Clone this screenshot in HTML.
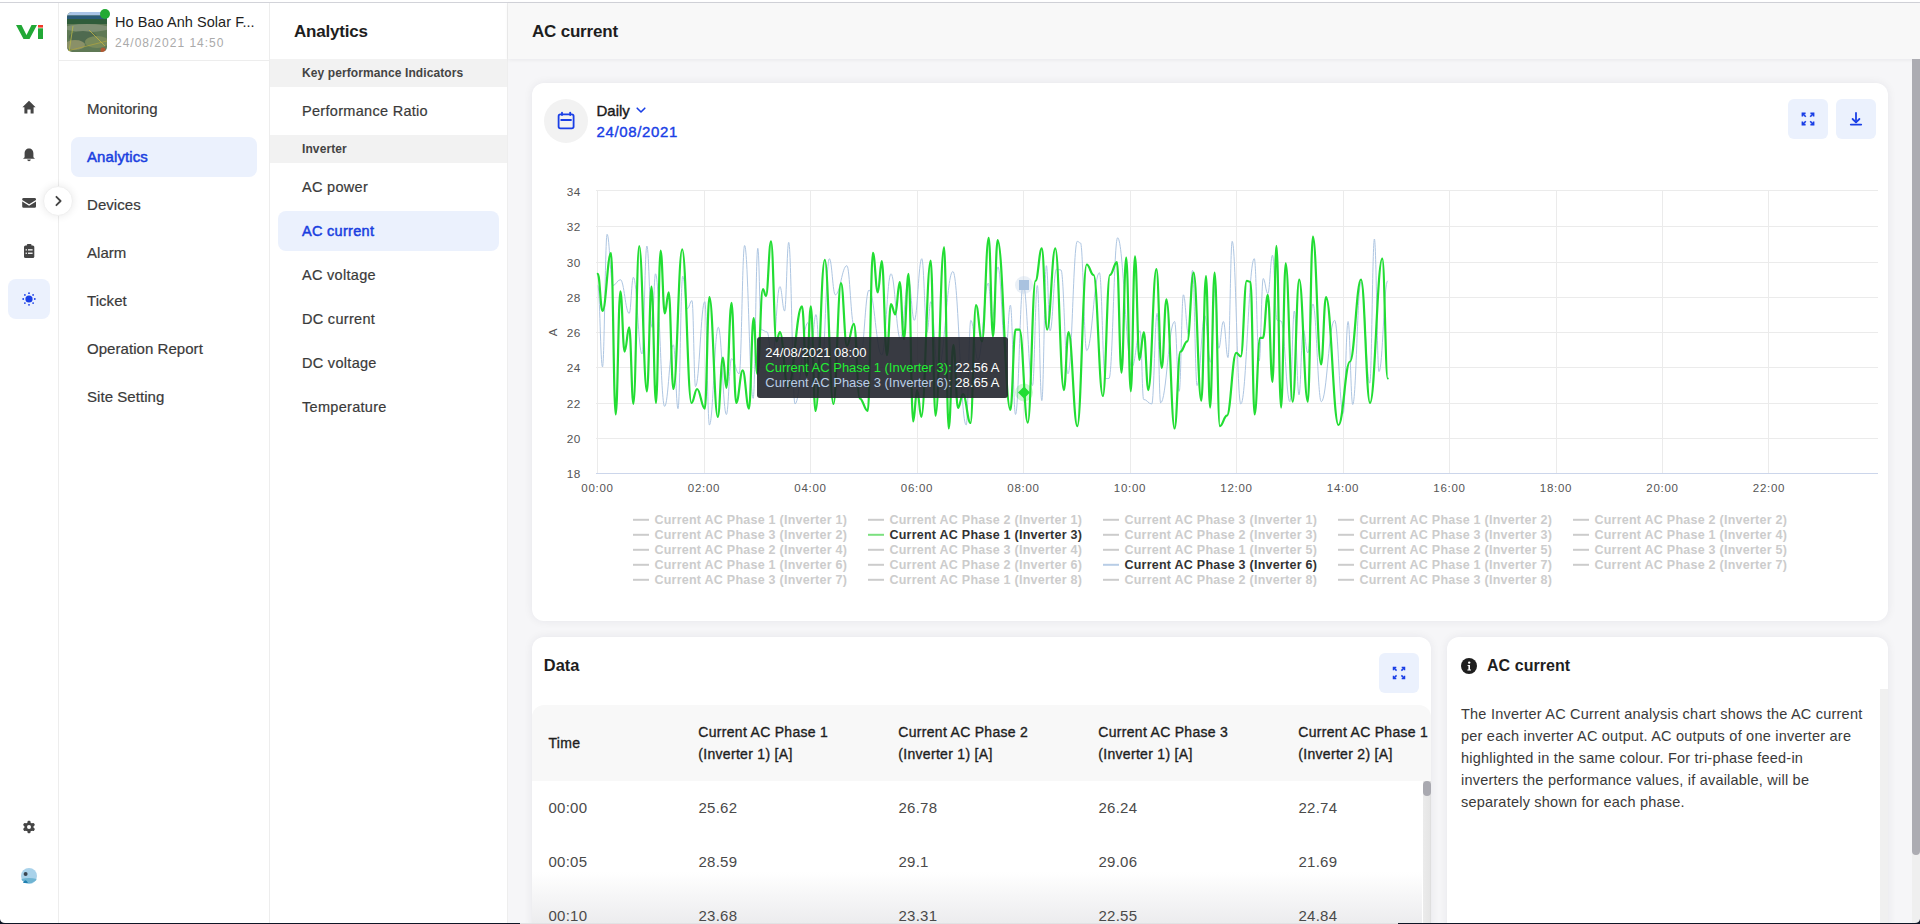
<!DOCTYPE html>
<html><head><meta charset="utf-8">
<style>
*{box-sizing:border-box;margin:0;padding:0}
html,body{width:1920px;height:924px;overflow:hidden;background:#fff;font-family:"Liberation Sans",sans-serif;color:#222}
.abs{position:absolute}
#topline{left:0;top:2px;width:1920px;height:1px;background:#d2d3d9}
#rail{left:0;top:3px;width:59px;height:921px;background:#fff;border-right:1px solid #ededed}
#nav{left:59px;top:3px;width:211px;height:921px;background:#fff;border-right:1px solid #ededed}
#navhead{left:59px;top:3px;width:210px;height:58px;border-bottom:1px solid #ededed}
#sub{left:270px;top:3px;width:238px;height:921px;background:#fff;border-right:1px solid #eeeeee}
#main{left:508px;top:3px;width:1404px;height:921px;background:#f6f6f8}
#mainhead{left:508px;top:3px;width:1412px;height:56px;background:#f8f8f8;box-shadow:0 1px 4px rgba(0,0,30,0.06)}
#sbtrack{left:1912px;top:59px;width:8px;height:865px;background:#efefef}
#sbthumb{left:1912px;top:59px;width:8px;height:796px;background:#acacb2;border-radius:0 0 4px 4px}
#bottomline{left:0;top:923px;width:1920px;height:1px;background:#0f1626}
.card{background:#fff;border-radius:12px;box-shadow:0 0 10px rgba(30,30,60,0.07)}
.navitem{position:absolute;left:87px;font-size:15px;color:#3a3a3a;letter-spacing:0.05px;-webkit-text-stroke:0.2px #3a3a3a}
.subitem{position:absolute;left:302px;font-size:14.5px;color:#3a3a3a;letter-spacing:0.3px;-webkit-text-stroke:0.2px #3a3a3a}
.band{position:absolute;left:270px;width:237px;height:27px;background:#f2f2f2}
.th{font-size:14px;font-weight:400;color:#1e1e1e;line-height:22px;letter-spacing:0.3px;-webkit-text-stroke:0.35px #1e1e1e}
.td{font-size:15px;color:#4a4a4a;letter-spacing:0.25px}
.bandtxt{position:absolute;left:302px;font-size:12px;font-weight:700;color:#444;letter-spacing:0.1px}
</style></head><body>
<div id="topline" class="abs"></div>
<div id="rail" class="abs"></div>
<div id="nav" class="abs"></div>
<div id="navhead" class="abs"></div>
<div id="sub" class="abs"></div>
<div id="main" class="abs"></div>
<div id="mainhead" class="abs"></div>
<div id="sbtrack" class="abs"></div>
<div id="sbthumb" class="abs"></div>


<!-- rail icons -->
<svg class="abs" style="left:0;top:0" width="59" height="924" viewBox="0 0 59 924">
  <!-- logo -->
  <path d="M16 25 L21.5 25 L26.5 35 L31.5 25 L37 25 L29.5 39 L23.5 39 Z" fill="#22a836"/>
  <rect x="38" y="25" width="5" height="2.6" fill="#f03a2a"/>
  <rect x="38" y="28.3" width="5" height="10.7" fill="#22a836"/>
  <!-- home -->
  <path d="M29 100.8 L35.6 107.2 L33.6 107.2 L33.6 113.4 L30.6 113.4 L30.6 109.6 L27.4 109.6 L27.4 113.4 L24.4 113.4 L24.4 107.2 L22.4 107.2 Z" fill="#454545"/>
  <!-- bell -->
  <path d="M29 148.4 C25.6 148.4 24.6 151 24.6 153.6 L24.6 157.2 L23 158.8 L35 158.8 L33.4 157.2 L33.4 153.6 C33.4 151 32.4 148.4 29 148.4 Z" fill="#454545"/>
  <path d="M27.2 159.6 L30.8 159.6 C30.6 160.8 29.9 161.3 29 161.3 C28.1 161.3 27.4 160.8 27.2 159.6 Z" fill="#454545"/>
  <!-- mail -->
  <path d="M22.2 199.4 Q22.2 198 23.6 198 L34.6 198 Q36 198 36 199.4 L36 200 L29.1 204.2 L22.2 200 Z" fill="#454545"/>
  <path d="M22.2 201.6 L29.1 205.8 L36 201.6 L36 206.4 Q36 207.8 34.6 207.8 L23.6 207.8 Q22.2 207.8 22.2 206.4 Z" fill="#454545"/>
  <!-- clipboard -->
  <rect x="24" y="245.5" width="10.3" height="12.5" rx="1.5" fill="#454545"/>
  <rect x="26.8" y="244" width="4.7" height="2.6" rx="1" fill="#454545"/>
  <rect x="25.6" y="249.2" width="1.3" height="1.3" fill="#fff"/>
  <rect x="28" y="249.2" width="4.6" height="1.3" fill="#fff"/>
  <rect x="25.6" y="252.6" width="1.3" height="1.3" fill="#fff"/>
  <rect x="28" y="252.6" width="4.6" height="1.3" fill="#fff"/>
  <!-- active box -->
  <rect x="8" y="279" width="42" height="40" rx="8" fill="#ebf1fd"/>
  <circle cx="29" cy="299" r="3.6" fill="#1a3fe6"/>
  <g fill="#1a3fe6">
    <circle cx="29" cy="293.2" r="0.9"/><circle cx="29" cy="304.8" r="0.9"/>
    <circle cx="23.2" cy="299" r="0.9"/><circle cx="34.8" cy="299" r="0.9"/>
    <circle cx="24.9" cy="294.9" r="0.9"/><circle cx="33.1" cy="294.9" r="0.9"/>
    <circle cx="24.9" cy="303.1" r="0.9"/><circle cx="33.1" cy="303.1" r="0.9"/>
  </g>
  <!-- gear -->
  <g transform="translate(29 827)">
    <g fill="#454545">
      <circle r="4.6"/>
      <rect x="-1.5" y="-6.2" width="3" height="12.4" rx="1"/>
      <rect x="-1.5" y="-6.2" width="3" height="12.4" rx="1" transform="rotate(60)"/>
      <rect x="-1.5" y="-6.2" width="3" height="12.4" rx="1" transform="rotate(120)"/>
    </g>
    <circle r="2" fill="#fff"/>
  </g>
  <!-- avatar -->
  <circle cx="29" cy="876" r="8" fill="#a9d2ea"/>
  <path d="M21.5 879 Q29 877 36.5 879 L36 880.5 Q29 886 22 880.5 Z" fill="#6fb4d2"/>
  <circle cx="25.6" cy="874" r="2" fill="#3b4550"/>
  <path d="M23 883 Q25.5 877.5 28 883 Z" fill="#1f7fb0"/>
</svg>
<!-- collapse button -->
<div class="abs" style="left:43px;top:186px;width:30px;height:30px;border-radius:50%;background:#fff;border:1px solid #f0f0f0;box-shadow:0 0 8px rgba(0,0,0,0.09)"></div>
<svg class="abs" style="left:43px;top:186px" width="30" height="30" viewBox="0 0 30 30"><path d="M13.4 10.8 L17.6 15 L13.4 19.2" fill="none" stroke="#444" stroke-width="1.8" stroke-linecap="round" stroke-linejoin="round"/></svg>


<!-- site header -->
<div class="abs" style="left:67px;top:12px;width:40px;height:40px;border-radius:5px;overflow:hidden"><svg style="display:block" width="40" height="40" viewBox="0 0 40 40"><g>
<rect width="40" height="40" fill="#5f7a55"/>
<rect width="40" height="3.5" fill="#a9c3e6"/>
<rect y="3.5" width="40" height="3.5" fill="#2b5a78"/>
<rect y="7" width="40" height="5" fill="#2f5c3a"/>
<ellipse cx="20" cy="16" rx="22" ry="4" fill="#7f8f74"/>
<ellipse cx="16" cy="25" rx="14" ry="6" fill="#4f6a4f"/>
<ellipse cx="30" cy="30" rx="12" ry="6" fill="#7a8a5c"/>
<ellipse cx="8" cy="33" rx="10" ry="5" fill="#8a9068"/>
<path d="M6 14 L2 40" stroke="#b8b848" stroke-width="1" opacity="0.8"/>
<path d="M0 39 L40 29" stroke="#b0a640" stroke-width="0.9" opacity="0.8"/>
<path d="M22 18 L38 34" stroke="#c2b444" stroke-width="1" opacity="0.8"/>
<circle cx="36" cy="38" r="2.5" fill="#c8502c" opacity="0.8"/>
</g></svg></div>
<div class="abs" style="left:100px;top:9px;width:10px;height:10px;border-radius:50%;background:#22aa33"></div>
<div class="abs" style="left:115px;top:13.5px;font-size:14.5px;color:#1e1e1e;letter-spacing:0.05px">Ho Bao Anh Solar F...</div>
<div class="abs" style="left:115px;top:36px;font-size:12px;color:#aaa;letter-spacing:1px">24/08/2021 14:50</div>

<!-- nav -->
<div class="abs" style="left:71px;top:137px;width:186px;height:40px;border-radius:8px;background:#ebf1fd"></div>
<div class="navitem" style="top:100px">Monitoring</div>
<div class="navitem" style="top:148px;color:#1a3fe0;font-weight:400;letter-spacing:0.1px;-webkit-text-stroke:0.5px #1a3fe0">Analytics</div>
<div class="navitem" style="top:196px">Devices</div>
<div class="navitem" style="top:244px">Alarm</div>
<div class="navitem" style="top:292px">Ticket</div>
<div class="navitem" style="top:340px">Operation Report</div>
<div class="navitem" style="top:388px">Site Setting</div>

<!-- sub nav -->
<div class="abs" style="left:294px;top:22px;font-size:17px;font-weight:700;color:#1e1e1e;letter-spacing:-0.2px">Analytics</div>
<div class="band" style="top:59px;height:28px"></div>
<div class="bandtxt" style="top:66px">Key performance Indicators</div>
<div class="subitem" style="top:103px">Performance Ratio</div>
<div class="band" style="top:135px;height:28px"></div>
<div class="bandtxt" style="top:142px">Inverter</div>
<div class="abs" style="left:278px;top:211px;width:221px;height:40px;border-radius:8px;background:#ebf1fd"></div>
<div class="subitem" style="top:179px">AC power</div>
<div class="subitem" style="top:223px;color:#1a3fe0;font-weight:400;letter-spacing:0.3px;-webkit-text-stroke:0.5px #1a3fe0">AC current</div>
<div class="subitem" style="top:267px">AC voltage</div>
<div class="subitem" style="top:311px">DC current</div>
<div class="subitem" style="top:355px">DC voltage</div>
<div class="subitem" style="top:399px">Temperature</div>

<!-- main header -->
<div class="abs" style="left:532px;top:22px;font-size:17px;font-weight:700;color:#1e1e1e;letter-spacing:-0.2px">AC current</div>

<!-- chart card -->
<div class="abs card" style="left:532px;top:83px;width:1356px;height:538px"></div>
<!-- data card -->
<div class="abs card" style="left:532px;top:637px;width:899px;height:300px"></div>
<!-- info card -->
<div class="abs card" style="left:1447px;top:637px;width:441px;height:300px"></div>


<!-- CHART_STATIC -->
<svg class="abs" style="left:0;top:0" width="1920" height="924" viewBox="0 0 1920 924">
<circle cx="566" cy="121" r="22" fill="#f2f2f2"/>
<g fill="none" stroke="#1a3fe6" stroke-width="1.8" stroke-linecap="round"><rect x="558.6" y="114.4" width="15" height="14" rx="1.8"/><line x1="561.2" y1="120" x2="571" y2="120"/><line x1="562" y1="112.6" x2="562" y2="115"/><line x1="570.2" y1="112.6" x2="570.2" y2="115"/></g>
<path d="M637.2 108.2 L641 112 L644.8 108.2" fill="none" stroke="#1a3fe6" stroke-width="1.6" stroke-linecap="round" stroke-linejoin="round"/>
<rect x="1788" y="99" width="40" height="40" rx="6" fill="#ebf1fd"/>
<rect x="1836" y="99" width="40" height="40" rx="6" fill="#ebf1fd"/>
<g fill="none" stroke="#1a3fe6" stroke-width="1.6" stroke-linecap="butt"><line x1="1805.8" y1="116.8" x2="1802.4" y2="113.4"/><polyline points="1802.4 116.60000000000001 1802.4 113.4 1805.6000000000001 113.4"/><line x1="1810.2" y1="116.8" x2="1813.6" y2="113.4"/><polyline points="1813.6 116.60000000000001 1813.6 113.4 1810.3999999999999 113.4"/><line x1="1805.8" y1="121.2" x2="1802.4" y2="124.6"/><polyline points="1802.4 121.39999999999999 1802.4 124.6 1805.6000000000001 124.6"/><line x1="1810.2" y1="121.2" x2="1813.6" y2="124.6"/><polyline points="1813.6 121.39999999999999 1813.6 124.6 1810.3999999999999 124.6"/></g>
<g fill="none" stroke="#1a3fe6" stroke-width="1.8" stroke-linecap="round" stroke-linejoin="round"><line x1="1856" y1="113" x2="1856" y2="122"/><polyline points="1852.6 119 1856 122.4 1859.4 119"/><line x1="1850.8" y1="124.6" x2="1861.2" y2="124.6"/></g>
<line x1="597.5" y1="190" x2="597.5" y2="473" stroke="#ebebeb" stroke-width="1"/>
<line x1="704.5" y1="190" x2="704.5" y2="473" stroke="#ebebeb" stroke-width="1"/>
<line x1="810.5" y1="190" x2="810.5" y2="473" stroke="#ebebeb" stroke-width="1"/>
<line x1="917.5" y1="190" x2="917.5" y2="473" stroke="#ebebeb" stroke-width="1"/>
<line x1="1023.5" y1="190" x2="1023.5" y2="473" stroke="#ebebeb" stroke-width="1"/>
<line x1="1130.5" y1="190" x2="1130.5" y2="473" stroke="#ebebeb" stroke-width="1"/>
<line x1="1236.5" y1="190" x2="1236.5" y2="473" stroke="#ebebeb" stroke-width="1"/>
<line x1="1343.5" y1="190" x2="1343.5" y2="473" stroke="#ebebeb" stroke-width="1"/>
<line x1="1449.5" y1="190" x2="1449.5" y2="473" stroke="#ebebeb" stroke-width="1"/>
<line x1="1556.5" y1="190" x2="1556.5" y2="473" stroke="#ebebeb" stroke-width="1"/>
<line x1="1662.5" y1="190" x2="1662.5" y2="473" stroke="#ebebeb" stroke-width="1"/>
<line x1="1768.5" y1="190" x2="1768.5" y2="473" stroke="#ebebeb" stroke-width="1"/>
<line x1="596" y1="190.5" x2="1878" y2="190.5" stroke="#ebebeb" stroke-width="1"/>
<line x1="596" y1="226.5" x2="1878" y2="226.5" stroke="#ebebeb" stroke-width="1"/>
<line x1="596" y1="262.5" x2="1878" y2="262.5" stroke="#ebebeb" stroke-width="1"/>
<line x1="596" y1="297.5" x2="1878" y2="297.5" stroke="#ebebeb" stroke-width="1"/>
<line x1="596" y1="332.5" x2="1878" y2="332.5" stroke="#ebebeb" stroke-width="1"/>
<line x1="596" y1="367.5" x2="1878" y2="367.5" stroke="#ebebeb" stroke-width="1"/>
<line x1="596" y1="403.5" x2="1878" y2="403.5" stroke="#ebebeb" stroke-width="1"/>
<line x1="596" y1="438.5" x2="1878" y2="438.5" stroke="#ebebeb" stroke-width="1"/>
<line x1="596" y1="473.5" x2="1878" y2="473.5" stroke="#ccd6eb" stroke-width="1"/>
<text x="580.5" y="196.20" text-anchor="end" font-size="11.8" fill="#555" letter-spacing="0.3">34</text>
<text x="580.5" y="231.44" text-anchor="end" font-size="11.8" fill="#555" letter-spacing="0.3">32</text>
<text x="580.5" y="266.68" text-anchor="end" font-size="11.8" fill="#555" letter-spacing="0.3">30</text>
<text x="580.5" y="301.92" text-anchor="end" font-size="11.8" fill="#555" letter-spacing="0.3">28</text>
<text x="580.5" y="337.16" text-anchor="end" font-size="11.8" fill="#555" letter-spacing="0.3">26</text>
<text x="580.5" y="372.40" text-anchor="end" font-size="11.8" fill="#555" letter-spacing="0.3">24</text>
<text x="580.5" y="407.64" text-anchor="end" font-size="11.8" fill="#555" letter-spacing="0.3">22</text>
<text x="580.5" y="442.88" text-anchor="end" font-size="11.8" fill="#555" letter-spacing="0.3">20</text>
<text x="580.5" y="478.12" text-anchor="end" font-size="11.8" fill="#555" letter-spacing="0.3">18</text>
<text x="597.5" y="492" text-anchor="middle" font-size="11.5" fill="#555" letter-spacing="0.7">00:00</text>
<text x="704.0" y="492" text-anchor="middle" font-size="11.5" fill="#555" letter-spacing="0.7">02:00</text>
<text x="810.5" y="492" text-anchor="middle" font-size="11.5" fill="#555" letter-spacing="0.7">04:00</text>
<text x="917.0" y="492" text-anchor="middle" font-size="11.5" fill="#555" letter-spacing="0.7">06:00</text>
<text x="1023.5" y="492" text-anchor="middle" font-size="11.5" fill="#555" letter-spacing="0.7">08:00</text>
<text x="1130.0" y="492" text-anchor="middle" font-size="11.5" fill="#555" letter-spacing="0.7">10:00</text>
<text x="1236.5" y="492" text-anchor="middle" font-size="11.5" fill="#555" letter-spacing="0.7">12:00</text>
<text x="1343.0" y="492" text-anchor="middle" font-size="11.5" fill="#555" letter-spacing="0.7">14:00</text>
<text x="1449.5" y="492" text-anchor="middle" font-size="11.5" fill="#555" letter-spacing="0.7">16:00</text>
<text x="1556.0" y="492" text-anchor="middle" font-size="11.5" fill="#555" letter-spacing="0.7">18:00</text>
<text x="1662.5" y="492" text-anchor="middle" font-size="11.5" fill="#555" letter-spacing="0.7">20:00</text>
<text x="1769.0" y="492" text-anchor="middle" font-size="11.5" fill="#555" letter-spacing="0.7">22:00</text>
<text x="556.5" y="332.5" font-size="11.5" fill="#555" text-anchor="middle" transform="rotate(-90 556.5 332.5)">A</text>
<line x1="633" y1="519.8000000000001" x2="649" y2="519.8000000000001" stroke="#cccccc" stroke-width="2" transform="translate(0 0)"/>
<text x="654.4" y="523.6" font-size="12.5" font-weight="700" fill="#cccccc" letter-spacing="0.25">Current AC Phase 1 (Inverter 1)</text>
<line x1="633" y1="519.8000000000001" x2="649" y2="519.8000000000001" stroke="#cccccc" stroke-width="2" transform="translate(235 0)"/>
<text x="889.4" y="523.6" font-size="12.5" font-weight="700" fill="#cccccc" letter-spacing="0.25">Current AC Phase 2 (Inverter 1)</text>
<line x1="633" y1="519.8000000000001" x2="649" y2="519.8000000000001" stroke="#cccccc" stroke-width="2" transform="translate(470 0)"/>
<text x="1124.4" y="523.6" font-size="12.5" font-weight="700" fill="#cccccc" letter-spacing="0.25">Current AC Phase 3 (Inverter 1)</text>
<line x1="633" y1="519.8000000000001" x2="649" y2="519.8000000000001" stroke="#cccccc" stroke-width="2" transform="translate(705 0)"/>
<text x="1359.4" y="523.6" font-size="12.5" font-weight="700" fill="#cccccc" letter-spacing="0.25">Current AC Phase 1 (Inverter 2)</text>
<line x1="633" y1="519.8000000000001" x2="649" y2="519.8000000000001" stroke="#cccccc" stroke-width="2" transform="translate(940 0)"/>
<text x="1594.4" y="523.6" font-size="12.5" font-weight="700" fill="#cccccc" letter-spacing="0.25">Current AC Phase 2 (Inverter 2)</text>
<line x1="633" y1="534.8000000000001" x2="649" y2="534.8000000000001" stroke="#cccccc" stroke-width="2" transform="translate(0 0)"/>
<text x="654.4" y="538.6" font-size="12.5" font-weight="700" fill="#cccccc" letter-spacing="0.25">Current AC Phase 3 (Inverter 2)</text>
<line x1="633" y1="534.8000000000001" x2="649" y2="534.8000000000001" stroke="#7be07f" stroke-width="2" transform="translate(235 0)"/>
<text x="889.4" y="538.6" font-size="12.5" font-weight="700" fill="#333" letter-spacing="0.25">Current AC Phase 1 (Inverter 3)</text>
<line x1="633" y1="534.8000000000001" x2="649" y2="534.8000000000001" stroke="#cccccc" stroke-width="2" transform="translate(470 0)"/>
<text x="1124.4" y="538.6" font-size="12.5" font-weight="700" fill="#cccccc" letter-spacing="0.25">Current AC Phase 2 (Inverter 3)</text>
<line x1="633" y1="534.8000000000001" x2="649" y2="534.8000000000001" stroke="#cccccc" stroke-width="2" transform="translate(705 0)"/>
<text x="1359.4" y="538.6" font-size="12.5" font-weight="700" fill="#cccccc" letter-spacing="0.25">Current AC Phase 3 (Inverter 3)</text>
<line x1="633" y1="534.8000000000001" x2="649" y2="534.8000000000001" stroke="#cccccc" stroke-width="2" transform="translate(940 0)"/>
<text x="1594.4" y="538.6" font-size="12.5" font-weight="700" fill="#cccccc" letter-spacing="0.25">Current AC Phase 1 (Inverter 4)</text>
<line x1="633" y1="549.8000000000001" x2="649" y2="549.8000000000001" stroke="#cccccc" stroke-width="2" transform="translate(0 0)"/>
<text x="654.4" y="553.6" font-size="12.5" font-weight="700" fill="#cccccc" letter-spacing="0.25">Current AC Phase 2 (Inverter 4)</text>
<line x1="633" y1="549.8000000000001" x2="649" y2="549.8000000000001" stroke="#cccccc" stroke-width="2" transform="translate(235 0)"/>
<text x="889.4" y="553.6" font-size="12.5" font-weight="700" fill="#cccccc" letter-spacing="0.25">Current AC Phase 3 (Inverter 4)</text>
<line x1="633" y1="549.8000000000001" x2="649" y2="549.8000000000001" stroke="#cccccc" stroke-width="2" transform="translate(470 0)"/>
<text x="1124.4" y="553.6" font-size="12.5" font-weight="700" fill="#cccccc" letter-spacing="0.25">Current AC Phase 1 (Inverter 5)</text>
<line x1="633" y1="549.8000000000001" x2="649" y2="549.8000000000001" stroke="#cccccc" stroke-width="2" transform="translate(705 0)"/>
<text x="1359.4" y="553.6" font-size="12.5" font-weight="700" fill="#cccccc" letter-spacing="0.25">Current AC Phase 2 (Inverter 5)</text>
<line x1="633" y1="549.8000000000001" x2="649" y2="549.8000000000001" stroke="#cccccc" stroke-width="2" transform="translate(940 0)"/>
<text x="1594.4" y="553.6" font-size="12.5" font-weight="700" fill="#cccccc" letter-spacing="0.25">Current AC Phase 3 (Inverter 5)</text>
<line x1="633" y1="564.8000000000001" x2="649" y2="564.8000000000001" stroke="#cccccc" stroke-width="2" transform="translate(0 0)"/>
<text x="654.4" y="568.6" font-size="12.5" font-weight="700" fill="#cccccc" letter-spacing="0.25">Current AC Phase 1 (Inverter 6)</text>
<line x1="633" y1="564.8000000000001" x2="649" y2="564.8000000000001" stroke="#cccccc" stroke-width="2" transform="translate(235 0)"/>
<text x="889.4" y="568.6" font-size="12.5" font-weight="700" fill="#cccccc" letter-spacing="0.25">Current AC Phase 2 (Inverter 6)</text>
<line x1="633" y1="564.8000000000001" x2="649" y2="564.8000000000001" stroke="#b8cde6" stroke-width="2" transform="translate(470 0)"/>
<text x="1124.4" y="568.6" font-size="12.5" font-weight="700" fill="#333" letter-spacing="0.25">Current AC Phase 3 (Inverter 6)</text>
<line x1="633" y1="564.8000000000001" x2="649" y2="564.8000000000001" stroke="#cccccc" stroke-width="2" transform="translate(705 0)"/>
<text x="1359.4" y="568.6" font-size="12.5" font-weight="700" fill="#cccccc" letter-spacing="0.25">Current AC Phase 1 (Inverter 7)</text>
<line x1="633" y1="564.8000000000001" x2="649" y2="564.8000000000001" stroke="#cccccc" stroke-width="2" transform="translate(940 0)"/>
<text x="1594.4" y="568.6" font-size="12.5" font-weight="700" fill="#cccccc" letter-spacing="0.25">Current AC Phase 2 (Inverter 7)</text>
<line x1="633" y1="579.8000000000001" x2="649" y2="579.8000000000001" stroke="#cccccc" stroke-width="2" transform="translate(0 0)"/>
<text x="654.4" y="583.6" font-size="12.5" font-weight="700" fill="#cccccc" letter-spacing="0.25">Current AC Phase 3 (Inverter 7)</text>
<line x1="633" y1="579.8000000000001" x2="649" y2="579.8000000000001" stroke="#cccccc" stroke-width="2" transform="translate(235 0)"/>
<text x="889.4" y="583.6" font-size="12.5" font-weight="700" fill="#cccccc" letter-spacing="0.25">Current AC Phase 1 (Inverter 8)</text>
<line x1="633" y1="579.8000000000001" x2="649" y2="579.8000000000001" stroke="#cccccc" stroke-width="2" transform="translate(470 0)"/>
<text x="1124.4" y="583.6" font-size="12.5" font-weight="700" fill="#cccccc" letter-spacing="0.25">Current AC Phase 2 (Inverter 8)</text>
<line x1="633" y1="579.8000000000001" x2="649" y2="579.8000000000001" stroke="#cccccc" stroke-width="2" transform="translate(705 0)"/>
<text x="1359.4" y="583.6" font-size="12.5" font-weight="700" fill="#cccccc" letter-spacing="0.25">Current AC Phase 3 (Inverter 8)</text>
</svg>
<!-- /CHART_STATIC -->
<!-- CHART_LINES -->
<svg class="abs" style="left:0;top:0" width="1920" height="924" viewBox="0 0 1920 924"><path d="M597.8 285.5C599.8 285.5 600.5 366.9 602.5 366.9C604.4 366.9 605.2 234.3 607.1 234.3C609.5 234.3 610.5 285.5 612.9 285.5C616.0 285.5 617.2 279.7 620.4 279.7C624.1 279.7 625.5 313.4 629.2 313.4C631.0 313.4 631.6 277.3 633.4 277.3C637.0 277.3 638.4 354.0 642.0 354.0C644.1 354.0 644.8 246.0 646.9 246.0C649.0 246.0 649.9 327.3 652.0 327.3C653.5 327.3 654.0 273.8 655.5 273.8C659.3 273.8 660.8 406.4 664.6 406.4C668.3 406.4 669.7 344.8 673.4 344.8C675.3 344.8 676.1 408.7 678.0 408.7C680.0 408.7 680.7 276.2 682.7 276.2C684.6 276.2 685.4 308.7 687.3 308.7C689.3 308.7 690.0 300.6 692.0 300.6C693.5 300.6 694.0 386.6 695.5 386.6C699.4 386.6 700.9 301.7 704.8 301.7C706.7 301.7 707.5 425.0 709.4 425.0C713.1 425.0 714.6 327.3 718.3 327.3C721.7 327.3 723.0 414.5 726.4 414.5C728.5 414.5 729.4 358.7 731.5 358.7C734.7 358.7 736.0 373.8 739.2 373.8C741.5 373.8 742.3 245.5 744.6 245.5C748.2 245.5 749.6 398.3 753.2 398.3C755.1 398.3 755.9 248.3 757.8 248.3C759.3 248.3 759.8 329.7 761.3 329.7C763.7 329.7 764.7 332.0 767.1 332.0C769.2 332.0 769.9 360.0 772.0 360.0C775.3 360.0 776.6 286.6 779.9 286.6C781.9 286.6 782.6 311.0 784.6 311.0C786.3 311.0 787.0 242.4 788.7 242.4C791.3 242.4 792.4 404.0 795.0 404.0C800.4 404.0 802.4 322.7 807.8 322.7C809.3 322.7 809.8 346.0 811.3 346.0C813.3 346.0 814.0 314.5 816.0 314.5C818.1 314.5 818.9 380.0 821.0 380.0C824.5 380.0 825.9 258.7 829.4 258.7C831.9 258.7 832.8 294.8 835.3 294.8C840.2 294.8 842.0 265.7 846.9 265.7C849.8 265.7 851.0 325.0 853.9 325.0C856.5 325.0 857.4 360.0 860.0 360.0C863.8 360.0 865.2 290.0 869.0 290.0C874.4 290.0 876.4 355.0 881.8 355.0C885.7 355.0 887.1 273.8 891.0 273.8C894.9 273.8 896.5 339.0 900.4 339.0C903.8 339.0 905.1 280.8 908.5 280.8C910.9 280.8 911.9 320.3 914.3 320.3C917.4 320.3 918.6 258.7 921.8 258.7C924.0 258.7 924.9 332.0 927.1 332.0C928.7 332.0 929.2 301.7 930.8 301.7C933.8 301.7 935.0 370.0 938.0 370.0C944.3 370.0 946.6 271.5 952.9 271.5C958.5 271.5 960.6 425.0 966.2 425.0C968.1 425.0 968.9 320.3 970.8 320.3C973.8 320.3 975.0 360.0 978.0 360.0C982.3 360.0 984.0 283.1 988.3 283.1C989.9 283.1 990.4 320.0 992.0 320.0C994.5 320.0 995.5 266.9 998.0 266.9C1001.2 266.9 1002.5 352.9 1005.7 352.9C1007.7 352.9 1008.4 305.2 1010.4 305.2C1012.5 305.2 1013.4 414.5 1015.5 414.5C1018.7 414.5 1020.0 284.3 1023.2 284.3C1027.1 284.3 1028.6 385.5 1032.5 385.5C1034.5 385.5 1035.3 285.5 1037.3 285.5C1039.2 285.5 1039.9 400.6 1041.8 400.6C1043.7 400.6 1044.5 265.7 1046.4 265.7C1048.0 265.7 1048.5 330.8 1050.1 330.8C1052.7 330.8 1053.8 269.2 1056.4 269.2C1058.3 269.2 1059.1 270.0 1061.0 270.0C1063.9 270.0 1065.1 373.8 1068.0 373.8C1071.9 373.8 1073.4 241.3 1077.3 241.3C1078.6 241.3 1079.2 243.0 1080.5 243.0C1083.1 243.0 1084.1 350.6 1086.7 350.6C1092.0 350.6 1094.1 272.7 1099.4 272.7C1101.9 272.7 1102.8 378.5 1105.3 378.5C1106.9 378.5 1107.4 378.5 1109.0 378.5C1112.6 378.5 1114.0 237.8 1117.6 237.8C1123.6 237.8 1126.0 366.9 1132.0 366.9C1135.4 366.9 1136.7 330.8 1140.1 330.8C1141.6 330.8 1142.1 399.4 1143.6 399.4C1147.0 399.4 1148.4 404.0 1151.8 404.0C1154.0 404.0 1154.9 313.4 1157.1 313.4C1158.6 313.4 1159.1 402.9 1160.6 402.9C1166.5 402.9 1168.7 321.5 1174.6 321.5C1176.5 321.5 1177.3 391.3 1179.2 391.3C1181.0 391.3 1181.6 294.8 1183.4 294.8C1185.5 294.8 1186.4 334.3 1188.5 334.3C1190.2 334.3 1190.8 270.3 1192.5 270.3C1194.4 270.3 1195.2 385.5 1197.1 385.5C1200.3 385.5 1201.6 315.7 1204.8 315.7C1207.2 315.7 1208.2 362.2 1210.6 362.2C1212.6 362.2 1213.3 286.6 1215.3 286.6C1216.7 286.6 1217.3 348.3 1218.7 348.3C1220.7 348.3 1221.4 321.5 1223.4 321.5C1225.3 321.5 1226.1 357.6 1228.0 357.6C1229.8 357.6 1230.4 241.3 1232.2 241.3C1235.8 241.3 1237.2 404.0 1240.8 404.0C1246.5 404.0 1248.6 258.7 1254.3 258.7C1256.4 258.7 1257.1 361.0 1259.2 361.0C1260.9 361.0 1261.5 278.5 1263.2 278.5C1265.1 278.5 1265.9 293.6 1267.8 293.6C1269.8 293.6 1270.5 255.2 1272.5 255.2C1274.4 255.2 1275.2 320.3 1277.1 320.3C1278.7 320.3 1279.4 321.0 1281.0 321.0C1284.7 321.0 1286.2 401.7 1289.9 401.7C1291.7 401.7 1292.5 311.0 1294.3 311.0C1296.3 311.0 1297.0 394.8 1299.0 394.8C1300.8 394.8 1301.4 329.7 1303.2 329.7C1305.1 329.7 1305.9 352.9 1307.8 352.9C1309.9 352.9 1310.8 304.0 1312.9 304.0C1316.4 304.0 1317.8 401.7 1321.3 401.7C1326.9 401.7 1329.0 320.3 1334.6 320.3C1338.2 320.3 1339.6 413.4 1343.2 413.4C1345.3 413.4 1346.0 321.5 1348.1 321.5C1350.0 321.5 1350.8 404.5 1352.7 404.5C1356.2 404.5 1357.5 282.0 1361.0 282.0C1364.7 282.0 1366.1 383.1 1369.8 383.1C1371.7 383.1 1372.5 239.0 1374.4 239.0C1376.3 239.0 1377.1 371.5 1379.0 371.5C1382.7 371.5 1384.0 280.8 1387.7 280.8" fill="none" stroke="#aec6e2" stroke-width="1" stroke-linejoin="round"/><path d="M597.8 273.8C599.8 273.8 600.5 311.0 602.5 311.0C606.1 311.0 607.4 253.0 611.0 253.0C613.0 253.0 613.7 414.5 615.7 414.5C617.7 414.5 618.4 291.3 620.4 291.3C622.2 291.3 622.8 351.7 624.6 351.7C626.5 351.7 627.3 327.3 629.2 327.3C631.0 327.3 631.6 404.0 633.4 404.0C635.8 404.0 636.8 246.0 639.2 246.0C642.4 246.0 643.7 391.3 646.9 391.3C648.8 391.3 649.6 286.6 651.5 286.6C653.4 286.6 654.1 403.0 656.0 403.0C657.9 403.0 658.7 250.6 660.6 250.6C662.4 250.6 663.0 313.4 664.8 313.4C666.4 313.4 667.1 292.4 668.7 292.4C670.7 292.4 671.4 389.0 673.4 389.0C677.1 389.0 678.5 249.4 682.2 249.4C686.1 249.4 687.6 403.0 691.5 403.0C693.9 403.0 694.7 389.0 697.1 389.0C700.3 389.0 701.6 408.7 704.8 408.7C706.7 408.7 707.5 297.0 709.4 297.0C712.9 297.0 714.3 416.9 717.8 416.9C719.9 416.9 720.8 357.6 722.9 357.6C724.4 357.6 724.9 387.8 726.4 387.8C728.5 387.8 729.4 302.9 731.5 302.9C733.5 302.9 734.2 402.9 736.2 402.9C738.9 402.9 740.0 370.3 742.7 370.3C745.3 370.3 746.4 408.7 749.0 408.7C750.9 408.7 751.7 318.0 753.6 318.0C755.2 318.0 755.7 373.8 757.3 373.8C759.7 373.8 760.5 289.0 762.9 289.0C764.2 289.0 764.7 296.0 766.0 296.0C768.1 296.0 768.9 241.3 771.0 241.3C773.3 241.3 774.1 341.3 776.4 341.3C777.9 341.3 778.4 332.0 779.9 332.0C783.3 332.0 784.6 387.8 788.0 387.8C793.9 387.8 796.1 306.4 802.0 306.4C804.0 306.4 804.7 376.0 806.7 376.0C808.4 376.0 809.1 306.4 810.8 306.4C812.8 306.4 813.5 411.0 815.5 411.0C819.4 411.0 820.9 259.9 824.8 259.9C828.4 259.9 829.8 404.0 833.4 404.0C836.6 404.0 837.8 283.1 841.0 283.1C843.5 283.1 844.4 346.0 846.9 346.0C849.8 346.0 851.0 323.8 853.9 323.8C856.3 323.8 857.3 398.3 859.7 398.3C863.1 398.3 864.4 411.0 867.8 411.0C869.9 411.0 870.8 252.9 872.9 252.9C875.0 252.9 875.7 292.4 877.8 292.4C879.5 292.4 880.1 261.0 881.8 261.0C883.9 261.0 884.8 355.2 886.9 355.2C888.6 355.2 889.3 304.0 891.0 304.0C892.8 304.0 893.5 314.5 895.3 314.5C897.1 314.5 897.9 282.0 899.7 282.0C901.5 282.0 902.1 339.0 903.9 339.0C905.8 339.0 906.6 273.8 908.5 273.8C910.5 273.8 911.2 421.5 913.2 421.5C914.8 421.5 915.5 390.0 917.1 390.0C918.9 390.0 919.5 416.9 921.3 416.9C925.2 416.9 926.8 260.5 930.7 260.5C932.7 260.5 933.5 415.7 935.5 415.7C939.1 415.7 940.5 247.1 944.1 247.1C946.0 247.1 946.8 428.5 948.7 428.5C950.7 428.5 951.4 344.8 953.4 344.8C955.3 344.8 956.1 408.0 958.0 408.0C960.1 408.0 960.9 394.0 963.0 394.0C966.1 394.0 967.4 423.0 970.5 423.0C972.8 423.0 973.7 305.2 976.0 305.2C978.5 305.2 979.5 341.3 982.0 341.3C984.8 341.3 985.9 237.8 988.7 237.8C990.5 237.8 991.2 336.6 993.0 336.6C994.9 336.6 995.7 240.1 997.6 240.1C1003.0 240.1 1005.0 409.9 1010.4 409.9C1012.5 409.9 1013.4 329.7 1015.5 329.7C1017.2 329.7 1017.8 329.7 1019.5 329.7C1023.0 329.7 1024.3 422.7 1027.8 422.7C1031.0 422.7 1032.3 280.8 1035.5 280.8C1038.1 280.8 1039.2 248.3 1041.8 248.3C1044.0 248.3 1044.9 329.7 1047.1 329.7C1050.5 329.7 1051.9 248.3 1055.3 248.3C1058.9 248.3 1060.3 390.1 1063.9 390.1C1065.8 390.1 1066.6 332.0 1068.5 332.0C1072.2 332.0 1073.6 426.2 1077.3 426.2C1081.2 426.2 1082.8 264.5 1086.7 264.5C1089.6 264.5 1090.7 275.0 1093.6 275.0C1097.5 275.0 1099.0 396.0 1102.9 396.0C1105.8 396.0 1107.0 275.0 1109.9 275.0C1112.8 275.0 1114.0 262.2 1116.9 262.2C1118.8 262.2 1119.6 372.7 1121.5 372.7C1123.5 372.7 1124.2 257.6 1126.2 257.6C1128.1 257.6 1128.9 391.3 1130.8 391.3C1132.6 391.3 1133.2 256.4 1135.0 256.4C1136.8 256.4 1137.6 359.9 1139.4 359.9C1141.2 359.9 1142.0 332.0 1143.8 332.0C1145.7 332.0 1146.4 390.1 1148.3 390.1C1151.7 390.1 1153.0 269.2 1156.4 269.2C1158.7 269.2 1159.5 368.0 1161.8 368.0C1163.7 368.0 1164.5 299.4 1166.4 299.4C1169.8 299.4 1171.2 428.5 1174.6 428.5C1177.0 428.5 1178.0 351.7 1180.4 351.7C1183.3 351.7 1184.4 341.3 1187.3 341.3C1189.9 341.3 1191.0 272.7 1193.6 272.7C1196.8 272.7 1198.1 400.6 1201.3 400.6C1203.3 400.6 1204.0 276.2 1206.0 276.2C1207.7 276.2 1208.4 407.6 1210.1 407.6C1212.0 407.6 1212.7 272.7 1214.6 272.7C1216.8 272.7 1217.7 426.2 1219.9 426.2C1222.8 426.2 1224.0 415.7 1226.9 415.7C1230.8 415.7 1232.3 352.9 1236.2 352.9C1238.1 352.9 1238.9 356.4 1240.8 356.4C1243.3 356.4 1244.2 280.8 1246.7 280.8C1248.3 280.8 1248.9 282.0 1250.5 282.0C1252.2 282.0 1252.9 414.5 1254.6 414.5C1256.9 414.5 1257.8 337.8 1260.1 337.8C1261.3 337.8 1261.8 337.8 1263.0 337.8C1265.0 337.8 1265.8 294.8 1267.8 294.8C1269.8 294.8 1270.5 382.0 1272.5 382.0C1274.1 382.0 1274.8 245.9 1276.4 245.9C1278.4 245.9 1279.1 407.6 1281.1 407.6C1283.0 407.6 1283.8 263.4 1285.7 263.4C1288.6 263.4 1289.8 401.7 1292.7 401.7C1295.4 401.7 1296.5 279.7 1299.2 279.7C1302.8 279.7 1304.2 401.7 1307.8 401.7C1309.9 401.7 1310.8 236.6 1312.9 236.6C1316.3 236.6 1317.7 364.5 1321.1 364.5C1323.2 364.5 1323.9 297.0 1326.0 297.0C1331.2 297.0 1333.2 425.0 1338.5 425.0C1343.3 425.0 1345.2 361.5 1350.0 361.5C1354.6 361.5 1356.4 279.7 1361.0 279.7C1364.8 279.7 1366.2 402.9 1370.0 402.9C1375.2 402.9 1377.1 258.7 1382.3 258.7C1384.6 258.7 1385.4 378.5 1387.7 378.5" fill="none" stroke="#22dd33" stroke-width="2.2" stroke-linejoin="round" stroke-linecap="round"/><circle cx="1024" cy="285" r="9" fill="#b8cde6" fill-opacity="0.3"/><rect x="1019" y="280" width="10" height="10" fill="#a9c2df"/><circle cx="1024" cy="392.5" r="9" fill="#22dd33" fill-opacity="0.22"/><path d="M1024 386.5 L1030 392.5 L1024 398.5 L1018 392.5 Z" fill="#22dd33"/></svg>
<!-- /CHART_LINES -->
<!-- TOOLTIP -->
<div class="abs" style="left:757px;top:337px;width:251px;height:60.5px;border-radius:3px;background:rgba(34,37,46,0.9)"></div>
<div class="abs" style="left:765.3px;top:345px;font-size:13px;line-height:15px;color:#fff;white-space:nowrap;letter-spacing:0">24/08/2021 08:00<br><span style="color:#22ee33">Current AC Phase 1 (Inverter 3):</span> 22.56 A<br><span style="color:#b8cde6">Current AC Phase 3 (Inverter 6):</span> 28.65 A</div>
<!-- /TOOLTIP -->
<div class="abs" style="left:596.5px;top:101.5px;font-size:15px;font-weight:400;color:#1a1a1a;letter-spacing:0px;-webkit-text-stroke:0.4px #1a1a1a">Daily</div>
<div class="abs" style="left:596.5px;top:122.5px;font-size:15px;font-weight:400;color:#1a3fe6;letter-spacing:0.65px;-webkit-text-stroke:0.4px #1a3fe6">24/08/2021</div>

<!-- data card content -->
<div class="abs" style="left:543.8px;top:656px;font-size:16.4px;font-weight:700;color:#1e1e1e;letter-spacing:0">Data</div>
<div class="abs" style="left:1379px;top:653px;width:40px;height:40px;border-radius:6px;background:#ebf1fd"></div>
<svg class="abs" style="left:1379px;top:653px" width="40" height="40" viewBox="0 0 40 40"><g fill="none" stroke="#1a3fe6" stroke-width="1.5"><line x1="17.6" y1="17.6" x2="14.5" y2="14.5"/><polyline points="14.5 17.3 14.5 14.5 17.3 14.5"/><line x1="22.4" y1="17.6" x2="25.5" y2="14.5"/><polyline points="22.7 14.5 25.5 14.5 25.5 17.3"/><line x1="17.6" y1="22.4" x2="14.5" y2="25.5"/><polyline points="14.5 22.7 14.5 25.5 17.3 25.5"/><line x1="22.4" y1="22.4" x2="25.5" y2="25.5"/><polyline points="22.7 25.5 25.5 25.5 25.5 22.7"/></g></svg>
<div class="abs" style="left:532px;top:705px;width:899px;height:76px;background:#f8f8f8;border-radius:12px 12px 0 0"></div>
<div class="abs" style="left:532px;top:872px;width:890px;height:51px;background:linear-gradient(180deg,rgba(238,238,240,0) 0%,rgba(236,236,238,1) 100%)"></div>
<div class="abs th" style="left:548.5px;top:732px">Time</div>
<div class="abs th" style="left:698.3px;top:721px">Current AC Phase 1<br>(Inverter 1) [A]</div>
<div class="abs th" style="left:898.3px;top:721px">Current AC Phase 2<br>(Inverter 1) [A]</div>
<div class="abs th" style="left:1098.3px;top:721px">Current AC Phase 3<br>(Inverter 1) [A]</div>
<div class="abs th" style="left:1298.3px;top:721px;width:133px;overflow:hidden;white-space:nowrap">Current AC Phase 1<br>(Inverter 2) [A]</div>
<div class="abs td" style="left:548.5px;top:799px">00:00</div>
<div class="abs td" style="left:698.5px;top:799px">25.62</div>
<div class="abs td" style="left:898.5px;top:799px">26.78</div>
<div class="abs td" style="left:1098.5px;top:799px">26.24</div>
<div class="abs td" style="left:1298.5px;top:799px">22.74</div>
<div class="abs td" style="left:548.5px;top:853px">00:05</div>
<div class="abs td" style="left:698.5px;top:853px">28.59</div>
<div class="abs td" style="left:898.5px;top:853px">29.1</div>
<div class="abs td" style="left:1098.5px;top:853px">29.06</div>
<div class="abs td" style="left:1298.5px;top:853px">21.69</div>
<div class="abs td" style="left:548.5px;top:907px">00:10</div>
<div class="abs td" style="left:698.5px;top:907px">23.68</div>
<div class="abs td" style="left:898.5px;top:907px">23.31</div>
<div class="abs td" style="left:1098.5px;top:907px">22.55</div>
<div class="abs td" style="left:1298.5px;top:907px">24.84</div>
<div class="abs" style="left:1423px;top:781px;width:8px;height:142px;background:linear-gradient(90deg,#ebebeb 0%,#e6e6e6 80%,#dcdcdc 100%)"></div>
<div class="abs" style="left:1423px;top:781px;width:8px;height:15px;border-radius:4px;background:#a9a9b0"></div>

<!-- info card content -->
<svg class="abs" style="left:1461px;top:658px" width="16" height="16" viewBox="0 0 16 16"><circle cx="8" cy="8" r="8" fill="#1e1e1e"/><circle cx="8.2" cy="4.6" r="1.2" fill="#fff"/><path d="M6.6 7 L9 7 L9 11.4 L10 11.4 L10 12.4 L6.4 12.4 L6.4 11.4 L7.4 11.4 L7.4 8 L6.6 8 Z" fill="#fff"/></svg>
<div class="abs" style="left:1487px;top:656.5px;font-size:16px;font-weight:700;color:#1e1e1e;letter-spacing:0.05px">AC current</div>
<div class="abs" style="left:1880px;top:689px;width:8px;height:234px;background:#f0f0f0"></div>
<div class="abs" style="left:1461px;top:702.5px;font-size:14.5px;line-height:22px;color:#3a3a3a;letter-spacing:0.22px;white-space:nowrap">The Inverter AC Current analysis chart shows the AC current<br>per each inverter AC output. AC outputs of one inverter are<br>highlighted in the same colour. For tri-phase feed-in<br>inverters the performance values, if available, will be<br>separately shown for each phase.</div>

<div id="bottomline" class="abs"></div>
<svg class="abs" style="left:0;top:919px" width="5" height="5" viewBox="0 0 5 5"><path d="M0 0 L0 5 L5 5 L5 4 Q0.6 4 0 0 Z" fill="#0f1626"/></svg>
<svg class="abs" style="left:1915px;top:919px" width="5" height="5" viewBox="0 0 5 5"><path d="M5 0 L5 5 L0 5 L0 4 Q4.4 4 5 0 Z" fill="#0f1626"/></svg>
<div class="abs" style="left:520px;top:923px;width:878px;height:1px;background:#e2e2e4"></div>
</body></html>
